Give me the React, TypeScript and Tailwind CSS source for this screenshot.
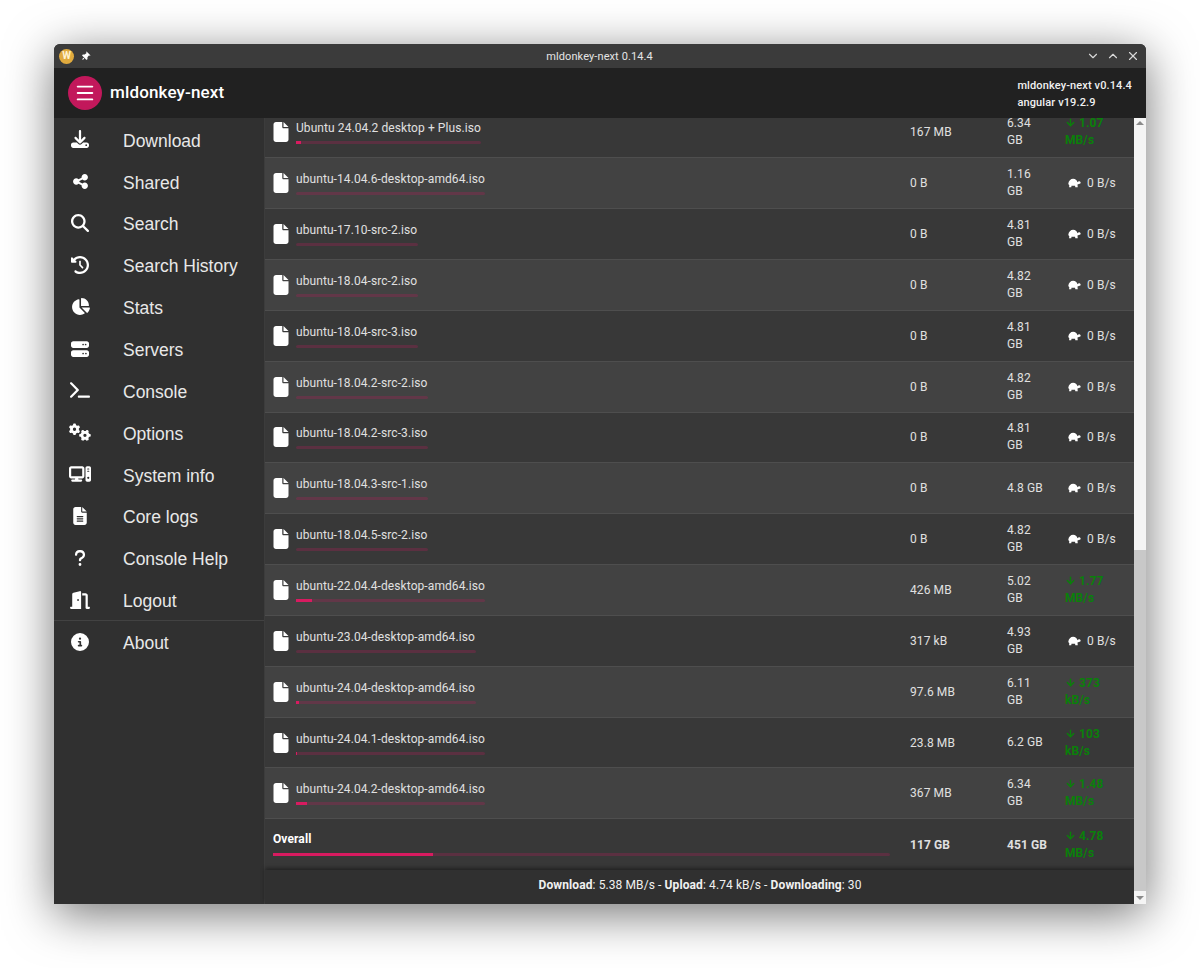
import React from "react";
import { Menu, ChevronDown, ChevronUp, X, ArrowDown } from "lucide-react";
import {
  FaDownload, FaShareNodes, FaMagnifyingGlass, FaClockRotateLeft, FaChartPie, FaServer, FaTerminal,
  FaGears, FaComputer, FaFileLines, FaQuestion, FaDoorOpen, FaCircleInfo, FaFile, FaThumbtack,
} from "react-icons/fa6";

const nav: [React.ComponentType<{ className?: string }>, string, string][] = [
  [FaDownload, "Download", "text-[18px]"],
  [FaShareNodes, "Shared", "text-[17px]"],
  [FaMagnifyingGlass, "Search", "text-[18px]"],
  [FaClockRotateLeft, "Search History", "text-[18px]"],
  [FaChartPie, "Stats", "text-[19px]"],
  [FaServer, "Servers", "text-[18px]"],
  [FaTerminal, "Console", "text-[20px]"],
  [FaGears, "Options", "text-[22px]"],
  [FaComputer, "System info", "text-[22px]"],
  [FaFileLines, "Core logs", "text-[18px]"],
  [FaQuestion, "Console Help", "text-[18px]"],
  [FaDoorOpen, "Logout", "text-[20px]"],
];

type Row = { name: string; size: string; total: string; speed: string | null; pct: number; w: number };
const rows: Row[] = [
  { name: "Ubuntu 24.04.2 desktop + Plus.iso", size: "167 MB", total: "6.34 GB", speed: "1.07 MB/s", pct: 2.5, w: 185 },
  { name: "ubuntu-14.04.6-desktop-amd64.iso", size: "0 B", total: "1.16 GB", speed: null, pct: 0, w: 189 },
  { name: "ubuntu-17.10-src-2.iso", size: "0 B", total: "4.81 GB", speed: null, pct: 0, w: 122 },
  { name: "ubuntu-18.04-src-2.iso", size: "0 B", total: "4.82 GB", speed: null, pct: 0, w: 122 },
  { name: "ubuntu-18.04-src-3.iso", size: "0 B", total: "4.81 GB", speed: null, pct: 0, w: 122 },
  { name: "ubuntu-18.04.2-src-2.iso", size: "0 B", total: "4.82 GB", speed: null, pct: 0, w: 132 },
  { name: "ubuntu-18.04.2-src-3.iso", size: "0 B", total: "4.81 GB", speed: null, pct: 0, w: 132 },
  { name: "ubuntu-18.04.3-src-1.iso", size: "0 B", total: "4.8 GB", speed: null, pct: 0, w: 132 },
  { name: "ubuntu-18.04.5-src-2.iso", size: "0 B", total: "4.82 GB", speed: null, pct: 0, w: 132 },
  { name: "ubuntu-22.04.4-desktop-amd64.iso", size: "426 MB", total: "5.02 GB", speed: "1.77 MB/s", pct: 8.5, w: 189 },
  { name: "ubuntu-23.04-desktop-amd64.iso", size: "317 kB", total: "4.93 GB", speed: null, pct: 0, w: 180 },
  { name: "ubuntu-24.04-desktop-amd64.iso", size: "97.6 MB", total: "6.11 GB", speed: "373 kB/s", pct: 1.6, w: 180 },
  { name: "ubuntu-24.04.1-desktop-amd64.iso", size: "23.8 MB", total: "6.2 GB", speed: "103 kB/s", pct: 0.4, w: 189 },
  { name: "ubuntu-24.04.2-desktop-amd64.iso", size: "367 MB", total: "6.34 GB", speed: "1.48 MB/s", pct: 5.8, w: 189 },
];

function Turtle() {
  return (
    <svg viewBox="0 0 24 18" className="w-[13px] h-[10px] fill-white shrink-0">
      <path d="M0.5 11 C1 4.5 5 1 9.5 1 C13.5 1 16.5 3.5 17.5 7.5 C18.5 5.8 20.5 5.2 22 6 C24 7 23.8 9.6 21.6 10.4 L17.5 11.8 L18 17 L13.5 17 L13 14 L6.5 14 L6 17 L2 17 L2.4 13.2 Z" />
    </svg>
  );
}

function Bar({ pct, width }: { pct: number; width: number }) {
  return (
    <div className="h-[3px] bg-[#c2185b]/25 rounded-sm" style={{ width }}>
      <div className="h-full bg-[#d81b60]" style={{ width: `${pct}%` }} />
    </div>
  );
}

function Speed({ speed }: { speed: string | null }) {
  if (!speed)
    return (
      <div className="w-[60px] ml-[3px] flex items-center gap-[6px] text-[#e0e0e0]">
        <Turtle />
        <span>0 B/s</span>
      </div>
    );
  return (
    <div className="w-[48px] font-bold text-[#0a800a] leading-[17px]">
      <ArrowDown size={11} strokeWidth={3} className="inline-block align-[-1px] mr-[3px]" />
      {speed}
    </div>
  );
}

export default function App() {
  return (
    <div className="w-[1200px] h-[968px] bg-white p-[44px_54px_64px_54px] font-['Roboto',sans-serif] overflow-hidden">
      <div className="w-[1092px] h-[860px] rounded-t-[6px] shadow-[0_10px_48px_rgba(0,0,0,0.55)] flex flex-col overflow-hidden bg-[#303030]">
        <div className="h-[24px] bg-[#3b3b3b] flex items-center pl-[5px] pr-[6px] shrink-0">
          <div className="w-[70px] flex items-center">
            <div className="w-[15px] h-[15px] rounded-full bg-[#e0aa3e] flex items-center justify-center text-[10px] leading-none font-bold text-[#fff3d0]">W</div>
            <FaThumbtack className="ml-[7px] text-white text-[9px] rotate-45" />
          </div>
          <div className="flex-1 text-center text-[11px] tracking-[0.1px] text-[#e4e4e4] pt-[2px]">mldonkey-next 0.14.4</div>
          <div className="w-[70px] flex items-center justify-end gap-[6px] text-[#d8d8d8]">
            <ChevronDown size={14} />
            <ChevronUp size={14} />
            <X size={14} />
          </div>
        </div>
        <div className="h-[50px] bg-[#212121] flex items-center pl-[14px] pr-[14px] shrink-0 text-white">
          <div className="w-[34px] h-[34px] rounded-full bg-[#c2185b] flex items-center justify-center">
            <Menu size={22} strokeWidth={2} />
          </div>
          <div className="ml-[8px] text-[17px] font-medium tracking-[0.15px]">mldonkey-next</div>
          <div className="ml-auto text-[11px] leading-[17px] font-medium tracking-[0.12px] text-[#f0f0f0] pt-[2px]">
            <div>mldonkey-next v0.14.4</div>
            <div>angular v19.2.9</div>
          </div>
        </div>
        <div className="flex-1 flex min-h-0">
          <nav className="w-[211px] shrink-0 bg-[#303030] border-r border-[#3c3c3c] font-['Liberation_Sans',sans-serif] text-[17.5px] text-[#e8e8e8] pt-[2px]">
            {nav.map(([Icon, label, size]) => (
              <div key={label} className="h-[41.85px] flex items-center">
                <div className={`w-[52px] flex justify-center text-white -mt-[3px] ${size}`}>
                  <Icon />
                </div>
                <span className="ml-[17px]">{label}</span>
              </div>
            ))}
            <div className="h-[45px] -mt-[2px] border-t border-[#424242] flex items-center">
              <div className="w-[52px] flex justify-center text-white text-[18px] -mt-[3px]">
                <FaCircleInfo />
              </div>
              <span className="ml-[17px]">About</span>
            </div>
          </nav>
          <div className="flex-1 flex flex-col min-w-0 relative">
            <div className="flex-1 min-h-0 overflow-hidden text-[12px] text-[#e0e0e0] tracking-[0.1px]">
              <div className="-mt-[10.5px]">
                {rows.map((r, i) => (
                  <div
                    key={r.name}
                    className={`h-[50.85px] flex items-center border-b border-[#4e4e4e] ${i % 2 === 0 ? "bg-[#383838]" : "bg-[#424242]"}`}
                  >
                    <div className="w-[645px] pl-[8px] flex items-center shrink-0">
                      <FaFile className="text-white text-[20px] w-[16px] shrink-0" />
                      <div className="ml-[7px]">
                        <div className="leading-[16px] mb-[5px] whitespace-nowrap tracking-[0.08px]">{r.name}</div>
                        <Bar pct={r.pct} width={r.w} />
                      </div>
                    </div>
                    <div className="w-[97px] shrink-0">{r.size}</div>
                    <div className="w-[42px] mr-[16px] shrink-0 leading-[17px]">{r.total}</div>
                    <Speed speed={r.speed} />
                  </div>
                ))}
                <div className="h-[50.85px] flex items-center bg-[#383838] font-bold">
                  <div className="w-[645px] pl-[8px] shrink-0">
                    <div className="leading-[16px] mb-[6px] -mt-[2px] text-white">Overall</div>
                    <Bar pct={26} width={617} />
                  </div>
                  <div className="w-[97px] shrink-0">117 GB</div>
                  <div className="w-[58px] shrink-0">451 GB</div>
                  <Speed speed="4.78 MB/s" />
                </div>
              </div>
            </div>
            <div className="h-[34px] shrink-0 mr-[11px] pb-[4px] bg-[#303030] shadow-[0_-2px_4px_rgba(0,0,0,0.4)] flex items-center justify-center text-[12px] text-[#f0f0f0] tracking-[0.1px] relative">
              <span><b>Download</b>: 5.38 MB/s - <b>Upload</b>: 4.74 kB/s - <b>Downloading</b>: 30</span>
            </div>
            <div className="absolute right-0 top-0 bottom-0 w-[12px] bg-[#f4f4f4] flex flex-col items-center">
              <div className="mt-[3px] w-0 h-0 border-x-[4px] border-x-transparent border-b-[4px] border-b-[#8a8a8a]" />
              <div className="mt-[425px] w-full flex-1 bg-[#c8c8c8]" />
              <div className="h-[13px] flex items-center justify-center">
                <div className="w-0 h-0 border-x-[4px] border-x-transparent border-t-[4px] border-t-[#8a8a8a]" />
              </div>
            </div>
          </div>
        </div>
      </div>
    </div>
  );
}
